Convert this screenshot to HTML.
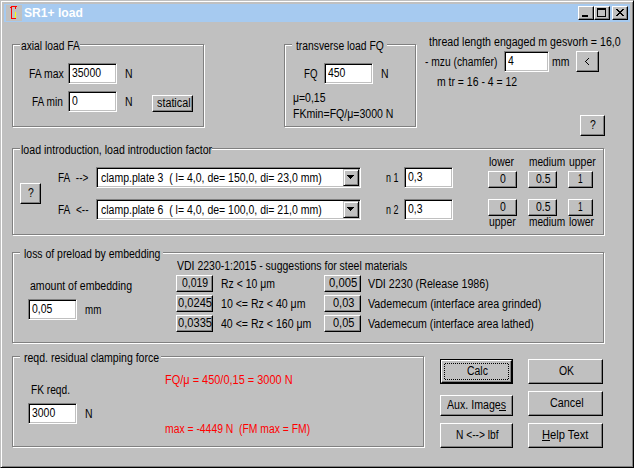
<!DOCTYPE html>
<html><head><meta charset='utf-8'><style>
html,body{margin:0;padding:0;}
body{width:634px;height:468px;overflow:hidden;position:relative;background:#c0c0c0;}
div{position:absolute;box-sizing:border-box;}
svg{position:absolute;}
.t{font-family:"Liberation Sans",sans-serif;font-size:12.0px;line-height:14px;white-space:nowrap;transform-origin:0 0;}
</style></head><body>
<div style='left:0px;top:0px;width:634px;height:468px;background:#c0c0c0;border-top:1px solid #c0c0c0;border-left:1px solid #c0c0c0;border-right:1px solid #000;border-bottom:1px solid #000;box-shadow:inset 1px 1px 0 #fff,inset -1px -1px 0 #808080'></div>
<div style='left:4px;top:4px;width:626px;height:18px;background:#a6caf0'></div>
<svg style='position:absolute;left:6px;top:5px' width='16' height='16' shape-rendering='crispEdges'>
<rect x='0' y='0' width='16' height='16' fill='#c0c0c0'/>
<rect x='5' y='1' width='6' height='1' fill='#f00'/>
<rect x='4' y='2' width='2' height='1' fill='#f00'/>
<rect x='9' y='2' width='1' height='2' fill='#f00'/>
<rect x='5' y='2' width='1' height='12' fill='#f00'/>
<rect x='5' y='13' width='5' height='1' fill='#f00'/>
<rect x='9' y='7' width='1' height='6' fill='#ff0'/>
</svg>
<div style='left:578px;top:6px;width:16px;height:14px;background:#c0c0c0;border-top:1px solid #fff;border-left:1px solid #fff;border-bottom:1px solid #000;border-right:1px solid #000;box-shadow:inset -1px -1px 0 #808080'></div>
<div style='left:594px;top:6px;width:16px;height:14px;background:#c0c0c0;border-top:1px solid #fff;border-left:1px solid #fff;border-bottom:1px solid #000;border-right:1px solid #000;box-shadow:inset -1px -1px 0 #808080'></div>
<div style='left:612px;top:6px;width:16px;height:14px;background:#c0c0c0;border-top:1px solid #fff;border-left:1px solid #fff;border-bottom:1px solid #000;border-right:1px solid #000;box-shadow:inset -1px -1px 0 #808080'></div>
<div style='left:582px;top:15px;width:6px;height:2px;background:#000'></div>
<div style='left:597px;top:8px;width:9px;height:9px;border:1px solid #000;border-top-width:2px'></div>
<svg style='position:absolute;left:616px;top:9px' width='8' height='7' shape-rendering='crispEdges' fill='#000'>
<rect x='0' y='0' width='2' height='1'/><rect x='6' y='0' width='2' height='1'/>
<rect x='1' y='1' width='2' height='1'/><rect x='5' y='1' width='2' height='1'/>
<rect x='2' y='2' width='4' height='1'/>
<rect x='3' y='3' width='2' height='1'/>
<rect x='2' y='4' width='4' height='1'/>
<rect x='1' y='5' width='2' height='1'/><rect x='5' y='5' width='2' height='1'/>
<rect x='0' y='6' width='2' height='1'/><rect x='6' y='6' width='2' height='1'/>
</svg>
<div style='left:13px;top:45px;width:192px;height:83px;border:1px solid #fff'></div>
<div style='left:12px;top:44px;width:192px;height:83px;border:1px solid #808080'></div>
<div style='left:20px;top:44px;width:60px;height:2px;background:#c0c0c0'></div>
<div style='left:68px;top:63px;width:49px;height:21px;background:#fff;border-top:1px solid #808080;border-left:1px solid #808080;border-bottom:1px solid #fff;border-right:1px solid #fff;box-shadow:inset 1px 1px 0 #000,inset -1px -1px 0 #c0c0c0'></div>
<div style='left:68px;top:91px;width:49px;height:21px;background:#fff;border-top:1px solid #808080;border-left:1px solid #808080;border-bottom:1px solid #fff;border-right:1px solid #fff;box-shadow:inset 1px 1px 0 #000,inset -1px -1px 0 #c0c0c0'></div>
<div style='left:152px;top:95px;width:41px;height:17px;background:#c0c0c0;border-top:1px solid #fff;border-left:1px solid #fff;border-bottom:1px solid #000;border-right:1px solid #000;box-shadow:inset -1px -1px 0 #808080'></div>
<div style='left:285px;top:45px;width:132px;height:83px;border:1px solid #fff'></div>
<div style='left:284px;top:44px;width:132px;height:83px;border:1px solid #808080'></div>
<div style='left:292px;top:44px;width:95px;height:2px;background:#c0c0c0'></div>
<div style='left:324px;top:63px;width:49px;height:21px;background:#fff;border-top:1px solid #808080;border-left:1px solid #808080;border-bottom:1px solid #fff;border-right:1px solid #fff;box-shadow:inset 1px 1px 0 #000,inset -1px -1px 0 #c0c0c0'></div>
<div style='left:504px;top:51px;width:45px;height:21px;background:#fff;border-top:1px solid #808080;border-left:1px solid #808080;border-bottom:1px solid #fff;border-right:1px solid #fff;box-shadow:inset 1px 1px 0 #000,inset -1px -1px 0 #c0c0c0'></div>
<div style='left:576px;top:51px;width:23px;height:21px;background:#c0c0c0;border-top:1px solid #fff;border-left:1px solid #fff;border-bottom:1px solid #000;border-right:1px solid #000;box-shadow:inset -1px -1px 0 #808080'></div>
<svg style='position:absolute;left:585px;top:58px' width='4' height='7' shape-rendering='crispEdges' fill='#000'><rect x='3' y='0' width='1' height='1'/><rect x='2' y='1' width='1' height='1'/><rect x='1' y='2' width='1' height='1'/><rect x='0' y='3' width='1' height='1'/><rect x='1' y='4' width='1' height='1'/><rect x='2' y='5' width='1' height='1'/><rect x='3' y='6' width='1' height='1'/></svg>
<div style='left:580px;top:115px;width:25px;height:21px;background:#c0c0c0;border-top:1px solid #fff;border-left:1px solid #fff;border-bottom:1px solid #000;border-right:1px solid #000;box-shadow:inset -1px -1px 0 #808080'></div>
<div style='left:13px;top:149px;width:592px;height:87px;border:1px solid #fff'></div>
<div style='left:12px;top:148px;width:592px;height:87px;border:1px solid #808080'></div>
<div style='left:20px;top:148px;width:192px;height:2px;background:#c0c0c0'></div>
<div style='left:20px;top:183px;width:21px;height:21px;background:#c0c0c0;border-top:1px solid #fff;border-left:1px solid #fff;border-bottom:1px solid #000;border-right:1px solid #000;box-shadow:inset -1px -1px 0 #808080'></div>
<div style='left:96px;top:167px;width:265px;height:21px;background:#fff;border-top:1px solid #808080;border-left:1px solid #808080;border-bottom:1px solid #fff;border-right:1px solid #fff;box-shadow:inset 1px 1px 0 #000,inset -1px -1px 0 #c0c0c0'></div>
<div style='left:343px;top:169px;width:16px;height:17px;background:#c0c0c0;border-top:1px solid #c0c0c0;border-left:1px solid #c0c0c0;border-bottom:1px solid #000;border-right:1px solid #000;box-shadow:inset 1px 1px 0 #fff,inset -1px -1px 0 #808080'></div>
<svg style='position:absolute;left:347px;top:175px' width='7' height='4' shape-rendering='crispEdges' fill='#000'><rect x='0' y='0' width='7' height='1'/><rect x='1' y='1' width='5' height='1'/><rect x='2' y='2' width='3' height='1'/><rect x='3' y='3' width='1' height='1'/></svg>
<div style='left:96px;top:199px;width:265px;height:21px;background:#fff;border-top:1px solid #808080;border-left:1px solid #808080;border-bottom:1px solid #fff;border-right:1px solid #fff;box-shadow:inset 1px 1px 0 #000,inset -1px -1px 0 #c0c0c0'></div>
<div style='left:343px;top:201px;width:16px;height:17px;background:#c0c0c0;border-top:1px solid #c0c0c0;border-left:1px solid #c0c0c0;border-bottom:1px solid #000;border-right:1px solid #000;box-shadow:inset 1px 1px 0 #fff,inset -1px -1px 0 #808080'></div>
<svg style='position:absolute;left:347px;top:207px' width='7' height='4' shape-rendering='crispEdges' fill='#000'><rect x='0' y='0' width='7' height='1'/><rect x='1' y='1' width='5' height='1'/><rect x='2' y='2' width='3' height='1'/><rect x='3' y='3' width='1' height='1'/></svg>
<div style='left:404px;top:167px;width:49px;height:21px;background:#fff;border-top:1px solid #808080;border-left:1px solid #808080;border-bottom:1px solid #fff;border-right:1px solid #fff;box-shadow:inset 1px 1px 0 #000,inset -1px -1px 0 #c0c0c0'></div>
<div style='left:404px;top:199px;width:49px;height:21px;background:#fff;border-top:1px solid #808080;border-left:1px solid #808080;border-bottom:1px solid #fff;border-right:1px solid #fff;box-shadow:inset 1px 1px 0 #000,inset -1px -1px 0 #c0c0c0'></div>
<div style='left:488px;top:171px;width:29px;height:17px;background:#c0c0c0;border-top:1px solid #fff;border-left:1px solid #fff;border-bottom:1px solid #000;border-right:1px solid #000;box-shadow:inset -1px -1px 0 #808080'></div>
<div style='left:528px;top:171px;width:29px;height:17px;background:#c0c0c0;border-top:1px solid #fff;border-left:1px solid #fff;border-bottom:1px solid #000;border-right:1px solid #000;box-shadow:inset -1px -1px 0 #808080'></div>
<div style='left:568px;top:171px;width:25px;height:17px;background:#c0c0c0;border-top:1px solid #fff;border-left:1px solid #fff;border-bottom:1px solid #000;border-right:1px solid #000;box-shadow:inset -1px -1px 0 #808080'></div>
<div style='left:488px;top:199px;width:29px;height:17px;background:#c0c0c0;border-top:1px solid #fff;border-left:1px solid #fff;border-bottom:1px solid #000;border-right:1px solid #000;box-shadow:inset -1px -1px 0 #808080'></div>
<div style='left:528px;top:199px;width:29px;height:17px;background:#c0c0c0;border-top:1px solid #fff;border-left:1px solid #fff;border-bottom:1px solid #000;border-right:1px solid #000;box-shadow:inset -1px -1px 0 #808080'></div>
<div style='left:568px;top:199px;width:25px;height:17px;background:#c0c0c0;border-top:1px solid #fff;border-left:1px solid #fff;border-bottom:1px solid #000;border-right:1px solid #000;box-shadow:inset -1px -1px 0 #808080'></div>
<div style='left:13px;top:253px;width:592px;height:91px;border:1px solid #fff'></div>
<div style='left:12px;top:252px;width:592px;height:91px;border:1px solid #808080'></div>
<div style='left:20px;top:252px;width:143px;height:2px;background:#c0c0c0'></div>
<div style='left:28px;top:299px;width:49px;height:21px;background:#fff;border-top:1px solid #808080;border-left:1px solid #808080;border-bottom:1px solid #fff;border-right:1px solid #fff;box-shadow:inset 1px 1px 0 #000,inset -1px -1px 0 #c0c0c0'></div>
<div style='left:176px;top:275px;width:37px;height:17px;background:#c0c0c0;border-top:1px solid #fff;border-left:1px solid #fff;border-bottom:1px solid #000;border-right:1px solid #000;box-shadow:inset -1px -1px 0 #808080'></div>
<div style='left:324px;top:275px;width:37px;height:17px;background:#c0c0c0;border-top:1px solid #fff;border-left:1px solid #fff;border-bottom:1px solid #000;border-right:1px solid #000;box-shadow:inset -1px -1px 0 #808080'></div>
<div style='left:176px;top:295px;width:37px;height:17px;background:#c0c0c0;border-top:1px solid #fff;border-left:1px solid #fff;border-bottom:1px solid #000;border-right:1px solid #000;box-shadow:inset -1px -1px 0 #808080'></div>
<div style='left:324px;top:295px;width:37px;height:17px;background:#c0c0c0;border-top:1px solid #fff;border-left:1px solid #fff;border-bottom:1px solid #000;border-right:1px solid #000;box-shadow:inset -1px -1px 0 #808080'></div>
<div style='left:176px;top:315px;width:37px;height:17px;background:#c0c0c0;border-top:1px solid #fff;border-left:1px solid #fff;border-bottom:1px solid #000;border-right:1px solid #000;box-shadow:inset -1px -1px 0 #808080'></div>
<div style='left:324px;top:315px;width:37px;height:17px;background:#c0c0c0;border-top:1px solid #fff;border-left:1px solid #fff;border-bottom:1px solid #000;border-right:1px solid #000;box-shadow:inset -1px -1px 0 #808080'></div>
<div style='left:13px;top:357px;width:412px;height:91px;border:1px solid #fff'></div>
<div style='left:12px;top:356px;width:412px;height:91px;border:1px solid #808080'></div>
<div style='left:20px;top:356px;width:141px;height:2px;background:#c0c0c0'></div>
<div style='left:28px;top:403px;width:49px;height:21px;background:#fff;border-top:1px solid #808080;border-left:1px solid #808080;border-bottom:1px solid #fff;border-right:1px solid #fff;box-shadow:inset 1px 1px 0 #000,inset -1px -1px 0 #c0c0c0'></div>
<div style='left:440px;top:359px;width:73px;height:25px;border:1px solid #000'></div>
<div style='left:441px;top:360px;width:71px;height:23px;background:#c0c0c0;border-top:1px solid #fff;border-left:1px solid #fff;border-bottom:1px solid #000;border-right:1px solid #000;box-shadow:inset -1px -1px 0 #808080'></div>
<svg style='position:absolute;left:444px;top:363px' width='65' height='17' shape-rendering='crispEdges'>
<defs><pattern id='ck' width='2' height='2' patternUnits='userSpaceOnUse'><rect x='1' y='0' width='1' height='1' fill='#000'/><rect x='0' y='1' width='1' height='1' fill='#000'/></pattern></defs>
<rect x='0' y='0' width='65' height='1' fill='url(#ck)'/><rect x='0' y='16' width='65' height='1' fill='url(#ck)'/>
<rect x='0' y='0' width='1' height='17' fill='url(#ck)'/><rect x='64' y='0' width='1' height='17' fill='url(#ck)'/>
</svg>
<div style='left:528px;top:359px;width:75px;height:25px;background:#c0c0c0;border-top:1px solid #fff;border-left:1px solid #fff;border-bottom:1px solid #000;border-right:1px solid #000;box-shadow:inset -1px -1px 0 #808080'></div>
<div style='left:440px;top:395px;width:73px;height:21px;background:#c0c0c0;border-top:1px solid #fff;border-left:1px solid #fff;border-bottom:1px solid #000;border-right:1px solid #000;box-shadow:inset -1px -1px 0 #808080'></div>
<div style='left:528px;top:391px;width:75px;height:25px;background:#c0c0c0;border-top:1px solid #fff;border-left:1px solid #fff;border-bottom:1px solid #000;border-right:1px solid #000;box-shadow:inset -1px -1px 0 #808080'></div>
<div style='left:440px;top:423px;width:73px;height:25px;background:#c0c0c0;border-top:1px solid #fff;border-left:1px solid #fff;border-bottom:1px solid #000;border-right:1px solid #000;box-shadow:inset -1px -1px 0 #808080'></div>
<div style='left:528px;top:423px;width:75px;height:25px;background:#c0c0c0;border-top:1px solid #fff;border-left:1px solid #fff;border-bottom:1px solid #000;border-right:1px solid #000;box-shadow:inset -1px -1px 0 #808080'></div>
<div style='left:499px;top:410px;width:7px;height:1px;background:#000'></div>
<div style='left:542px;top:440px;width:8px;height:1px;background:#000'></div>
<div class='t' style='left:24.00px;top:6px;color:#fff;font-weight:bold;font-size:12px;transform:scaleX(1.0092);'>SR1+ load</div>
<div class='t' style='left:21.00px;top:39px;color:#000;transform:scaleX(0.8553);'>axial load FA</div>
<div class='t' style='left:29.00px;top:67px;color:#000;transform:scaleX(0.8700);'>FA max</div>
<div class='t' style='left:72.00px;top:66px;color:#000;transform:scaleX(0.8700);'>35000</div>
<div class='t' style='left:125.00px;top:67px;color:#000;transform:scaleX(0.8700);'>N</div>
<div class='t' style='left:32.00px;top:95px;color:#000;transform:scaleX(0.8419);'>FA min</div>
<div class='t' style='left:72.00px;top:94px;color:#000;transform:scaleX(0.8700);'>0</div>
<div class='t' style='left:125.00px;top:95px;color:#000;transform:scaleX(0.8700);'>N</div>
<div class='t' style='left:157.00px;top:96px;color:#000;transform:scaleX(0.8981);'>statical</div>
<div class='t' style='left:296.00px;top:39px;color:#000;transform:scaleX(0.8601);'>transverse load FQ</div>
<div class='t' style='left:304.00px;top:67px;color:#000;transform:scaleX(0.8079);'>FQ</div>
<div class='t' style='left:328.00px;top:66px;color:#000;transform:scaleX(0.8700);'>450</div>
<div class='t' style='left:381.00px;top:67px;color:#000;transform:scaleX(0.8700);'>N</div>
<div class='t' style='left:293.00px;top:91px;color:#000;transform:scaleX(0.8700);'>&mu;=0,15</div>
<div class='t' style='left:293.00px;top:107px;color:#000;transform:scaleX(0.8789);'>FKmin=FQ/&mu;=3000 N</div>
<div class='t' style='left:429.00px;top:35px;color:#000;transform:scaleX(0.8854);'>thread length engaged m gesvorh = 16,0</div>
<div class='t' style='left:425.00px;top:55px;color:#000;transform:scaleX(0.8546);'>- mzu (chamfer)</div>
<div class='t' style='left:508.00px;top:54px;color:#000;transform:scaleX(0.8700);'>4</div>
<div class='t' style='left:552.00px;top:55px;color:#000;transform:scaleX(0.8700);'>mm</div>
<div class='t' style='left:437.00px;top:75px;color:#000;transform:scaleX(0.8700);'>m tr = 16 - 4 = 12</div>
<div class='t' style='left:590.00px;top:118px;color:#000;transform:scaleX(0.8700);'>?</div>
<div class='t' style='left:21.00px;top:143px;color:#000;transform:scaleX(0.8840);'>load introduction, load introduction factor</div>
<div class='t' style='left:28.00px;top:186px;color:#000;transform:scaleX(0.8700);'>?</div>
<div class='t' style='left:58.00px;top:171px;color:#000;transform:scaleX(0.8342);'>FA&nbsp; --&gt;</div>
<div class='t' style='left:58.00px;top:203px;color:#000;transform:scaleX(0.8419);'>FA&nbsp; &lt;--</div>
<div class='t' style='left:101.00px;top:171px;color:#000;transform:scaleX(0.8740);'>clamp.plate 3&nbsp; ( l= 4,0, de= 150,0, di= 23,0 mm)</div>
<div class='t' style='left:101.00px;top:203px;color:#000;transform:scaleX(0.8740);'>clamp.plate 6&nbsp; ( l= 4,0, de= 100,0, di= 21,0 mm)</div>
<div class='t' style='left:386.00px;top:171px;color:#000;transform:scaleX(0.7457);'>n 1</div>
<div class='t' style='left:386.00px;top:203px;color:#000;transform:scaleX(0.7457);'>n 2</div>
<div class='t' style='left:408.00px;top:170px;color:#000;transform:scaleX(0.8700);'>0,3</div>
<div class='t' style='left:408.00px;top:202px;color:#000;transform:scaleX(0.8700);'>0,3</div>
<div class='t' style='left:489.00px;top:155px;color:#000;transform:scaleX(0.8700);'>lower</div>
<div class='t' style='left:529.00px;top:155px;color:#000;transform:scaleX(0.8458);'>medium</div>
<div class='t' style='left:569.00px;top:155px;color:#000;transform:scaleX(0.8700);'>upper</div>
<div class='t' style='left:500.00px;top:172px;color:#000;transform:scaleX(0.8700);'>0</div>
<div class='t' style='left:536.00px;top:172px;color:#000;transform:scaleX(0.8700);'>0.5</div>
<div class='t' style='left:578.00px;top:172px;color:#000;transform:scaleX(0.6960);'>1</div>
<div class='t' style='left:500.00px;top:200px;color:#000;transform:scaleX(0.8700);'>0</div>
<div class='t' style='left:536.00px;top:200px;color:#000;transform:scaleX(0.8700);'>0.5</div>
<div class='t' style='left:578.00px;top:200px;color:#000;transform:scaleX(0.6960);'>1</div>
<div class='t' style='left:489.00px;top:215px;color:#000;transform:scaleX(0.8700);'>upper</div>
<div class='t' style='left:529.00px;top:215px;color:#000;transform:scaleX(0.8458);'>medium</div>
<div class='t' style='left:569.00px;top:215px;color:#000;transform:scaleX(0.8700);'>lower</div>
<div class='t' style='left:24.00px;top:247px;color:#000;transform:scaleX(0.8700);'>loss of preload by embedding</div>
<div class='t' style='left:30.00px;top:279px;color:#000;transform:scaleX(0.8787);'>amount of embedding</div>
<div class='t' style='left:32.00px;top:302px;color:#000;transform:scaleX(0.8700);'>0,05</div>
<div class='t' style='left:85.00px;top:303px;color:#000;transform:scaleX(0.8156);'>mm</div>
<div class='t' style='left:177.00px;top:259px;color:#000;transform:scaleX(0.8738);'>VDI 2230-1:2015 - suggestions for steel materials</div>
<div class='t' style='left:221.00px;top:277px;color:#000;transform:scaleX(0.8700);'>Rz &lt; 10 &mu;m</div>
<div class='t' style='left:368.00px;top:277px;color:#000;transform:scaleX(0.8923);'>VDI 2230 (Release 1986)</div>
<div class='t' style='left:221.00px;top:297px;color:#000;transform:scaleX(0.8806);'>10 &lt;= Rz &lt; 40 &mu;m</div>
<div class='t' style='left:368.00px;top:297px;color:#000;transform:scaleX(0.8907);'>Vademecum (interface area grinded)</div>
<div class='t' style='left:221.00px;top:317px;color:#000;transform:scaleX(0.8799);'>40 &lt;= Rz &lt; 160 &mu;m</div>
<div class='t' style='left:368.00px;top:317px;color:#000;transform:scaleX(0.8861);'>Vademecum (interface area lathed)</div>
<div class='t' style='left:182.00px;top:276px;color:#000;transform:scaleX(0.8700);'>0,019</div>
<div class='t' style='left:178.00px;top:296px;color:#000;transform:scaleX(0.9261);'>0,0245</div>
<div class='t' style='left:178.00px;top:316px;color:#000;transform:scaleX(0.9261);'>0,0335</div>
<div class='t' style='left:329.00px;top:276px;color:#000;transform:scaleX(0.9396);'>0,005</div>
<div class='t' style='left:333.00px;top:296px;color:#000;transform:scaleX(0.9158);'>0,03</div>
<div class='t' style='left:333.00px;top:316px;color:#000;transform:scaleX(0.9158);'>0,05</div>
<div class='t' style='left:24.00px;top:351px;color:#000;transform:scaleX(0.8765);'>reqd. residual clamping force</div>
<div class='t' style='left:31.00px;top:383px;color:#000;transform:scaleX(0.8477);'>FK reqd.</div>
<div class='t' style='left:32.00px;top:406px;color:#000;transform:scaleX(0.8700);'>3000</div>
<div class='t' style='left:85.00px;top:407px;color:#000;transform:scaleX(0.8700);'>N</div>
<div class='t' style='left:165.00px;top:373px;color:#f00;transform:scaleX(0.9135);'>FQ/&mu; = 450/0,15 = 3000 N</div>
<div class='t' style='left:165.00px;top:422px;color:#f00;transform:scaleX(0.8640);'>max = -4449 N&nbsp; (FM max = FM)</div>
<div class='t' style='left:467.00px;top:364px;color:#000;transform:scaleX(0.8700);'>Calc</div>
<div class='t' style='left:559.00px;top:364px;color:#000;transform:scaleX(0.8700);'>OK</div>
<div class='t' style='left:447.00px;top:398px;color:#000;transform:scaleX(0.8853);'>Aux. Images</div>
<div class='t' style='left:550.00px;top:396px;color:#000;transform:scaleX(0.8981);'>Cancel</div>
<div class='t' style='left:456.00px;top:428px;color:#000;transform:scaleX(0.8498);'>N &lt;--&gt; lbf</div>
<div class='t' style='left:542.00px;top:428px;color:#000;transform:scaleX(0.9307);'>Help Text</div>
</body></html>
